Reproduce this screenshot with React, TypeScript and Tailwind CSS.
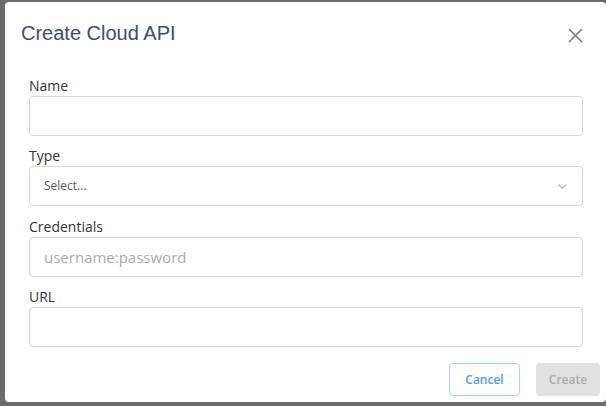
import React from "react";

function Field({ label, children }: { label: string; children: React.ReactNode }) {
    return (
        <div className="flex flex-col">
            <label className="h-[20px] text-[14px] leading-[20px] text-[#333333]">{label}</label>
            {children}
        </div>
    );
}

const inputCls =
    "h-[40px] w-full rounded-[4px] border border-[#d6d6d6] bg-white px-[14px] text-[15px] text-[#333] outline-none placeholder:text-[#ababab]";

export default function App() {
    return (
        <div
            className="h-[406px] w-[606px] overflow-hidden bg-[#6b6b6b] pl-[5px] pt-[2px]"
            style={{ fontFamily: '"Open Sans", "Noto Sans", sans-serif' }}
        >
            <div className="flex h-[400px] w-[601px] flex-col rounded-[4px] bg-white">
                <div className="flex items-start justify-between pl-[16px] pr-[23px] pt-[17px]">
                    <h1
                        className="h-[28px] text-[20px] leading-[28px] text-[#3d4c73]"
                        style={{ fontFamily: '"Liberation Sans", Arial, sans-serif' }}
                    >
                        Create Cloud API
                    </h1>
                    <button className="mt-[9px] text-[#7a7a7a]">
                        <svg width="15" height="15" viewBox="0 0 15 15" fill="none" stroke="currentColor" strokeWidth="1.6">
                            <path d="M1 1L14 14M14 1L1 14" />
                        </svg>
                    </button>
                </div>

                <div className="mt-[29px] flex w-[578px] flex-col gap-[10px] pl-[24px]">
                    <Field label="Name">
                        <input className={inputCls} />
                    </Field>
                    <Field label="Type">
                        <div className="flex h-[40px] w-full items-center justify-between rounded-[4px] border border-[#d6d6d6] bg-white pl-[14px] pr-[15px]">
                            <span className="text-[12px] text-[#555555]">Select...</span>
                            <svg width="9" height="5" viewBox="0 0 9 5" fill="none" stroke="#b9b9b9" strokeWidth="1.3">
                                <path d="M0.5 0.5L4.5 4.3L8.5 0.5" />
                            </svg>
                        </div>
                    </Field>
                    <div className="mt-[1px]">
                        <Field label="Credentials">
                            <input className={inputCls} placeholder="username:password" />
                        </Field>
                    </div>
                    <Field label="URL">
                        <input className={inputCls} />
                    </Field>
                </div>

                <div className="mt-[16px] flex justify-end gap-[16px] pr-[6px]">
                    <button className="h-[33px] w-[71px] rounded-[4px] border border-[#a9d3fb] bg-white text-[12px] font-semibold text-[#4c9df0]">
                        Cancel
                    </button>
                    <button
                        disabled
                        className="h-[33px] w-[64px] rounded-[4px] bg-[#e1e1e1] text-[12px] font-semibold text-[#ababab]"
                    >
                        Create
                    </button>
                </div>
            </div>
        </div>
    );
}
